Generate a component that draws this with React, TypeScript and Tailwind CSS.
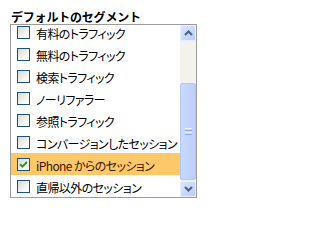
import React from "react";

const items = [
  "有料のトラフィック",
  "無料のトラフィック",
  "検索トラフィック",
  "ノーリファラー",
  "参照トラフィック",
  "コンバージョンしたセッション",
  "iPhone からのセッション",
  "直帰以外のセッション",
];

function Box({ checked }: { checked: boolean }) {
  return (
    <div className="w-[13px] h-[13px] shrink-0 border border-[#1c5180] bg-[linear-gradient(135deg,#d8d8d2_0%,#f4f4f0_60%,#ffffff_100%)] flex items-center justify-center">
      {checked && (
        <svg width="9" height="9" viewBox="0 0 9 9">
          <path d="M1 4.2 L3.4 6.6 L8 2" fill="none" stroke="#21a121" strokeWidth="2" />
        </svg>
      )}
    </div>
  );
}

function Chevron({ up }: { up: boolean }) {
  return (
    <svg width="9" height="6" viewBox="0 0 9 6">
      <path
        d={up ? "M1 5 L4.5 1.5 L8 5" : "M1 1 L4.5 4.5 L8 1"}
        fill="none"
        stroke="#4d6185"
        strokeWidth="2"
      />
    </svg>
  );
}

export default function App() {
  return (
    <div className="w-[208px] h-[208px] bg-white font-['Noto_Sans_CJK_JP',sans-serif] text-black overflow-hidden">
      <div className="pl-[11px] pt-[3px] h-[24px]">
        <span className="text-[12px] font-bold leading-[18px] whitespace-nowrap tracking-[-0.2px]">
          デフォルトのセグメント
        </span>
      </div>
      <div className="ml-[10px] w-[187px] h-[174px] border border-[#9c9c9c] flex">
        <div className="w-[169px] h-full overflow-hidden">
          <div className="-mt-[4px]">
            {items.map((t, i) => (
              <div
                key={t}
                className={`h-[22px] flex items-start pt-[5px] pl-[6px] ${i === 6 ? "bg-[#fdc968]" : ""}`}
              >
                <Box checked={i === 6} />
                <span
                  className={`ml-[6px] mt-[1px] text-[12px] leading-[13px] whitespace-nowrap tracking-[-0.6px] [font-feature-settings:'palt'] ${i === 6 ? "text-[#3b1200]" : "text-black"}`}
                >
                  {t}
                </span>
              </div>
            ))}
          </div>
        </div>
        <div className="w-[16px] h-full flex flex-col bg-[#f3f2ec]">
          <div className="h-[16px] rounded-[2px] border border-[#e6edfd] bg-[linear-gradient(135deg,#dbe6fe,#b9cdfa)] flex items-center justify-center">
            <Chevron up />
          </div>
          <div className="flex-1 flex flex-col pt-[42px] pb-[1px]">
            <div className="flex-1 rounded-[2px] border border-[#b3c8f7] bg-[linear-gradient(90deg,#c9d9fd,#bccffb)] flex flex-col items-center justify-center gap-[1px]">
              <div className="w-[7px] h-[1px] bg-[#eef3fe]" />
              <div className="w-[7px] h-[1px] bg-[#8fb0f2]" />
              <div className="w-[7px] h-[1px] bg-[#eef3fe]" />
              <div className="w-[7px] h-[1px] bg-[#8fb0f2]" />
            </div>
          </div>
          <div className="h-[16px] rounded-[2px] border border-[#e6edfd] bg-[linear-gradient(135deg,#dbe6fe,#b9cdfa)] flex items-center justify-center">
            <Chevron up={false} />
          </div>
        </div>
      </div>
    </div>
  );
}
